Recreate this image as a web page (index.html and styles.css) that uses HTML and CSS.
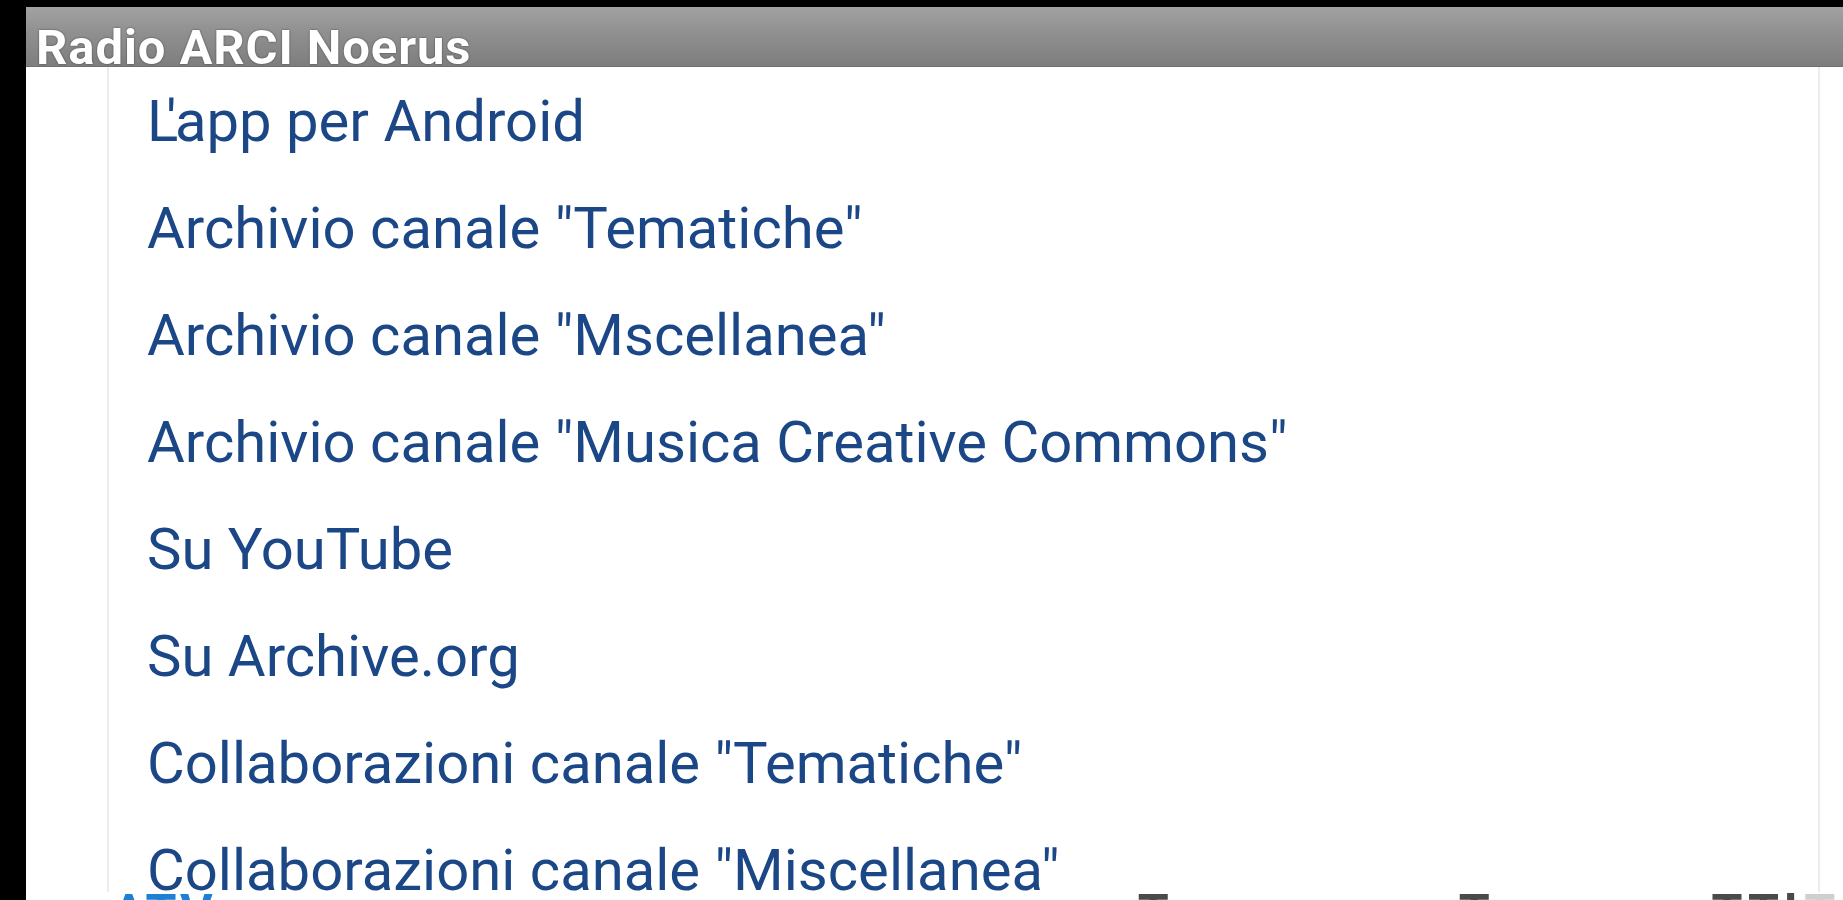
FILE: index.html
```html
<!DOCTYPE html>
<html lang="it">
<head>
<meta charset="utf-8">
<title>Radio ARCI Noerus</title>
<link rel="stylesheet" href="styles.css">
</head>
<body>
<div class="screen">
  <header class="titlebar"><span class="title">Radio ARCI Noerus</span></header>
  <main class="content">
    <nav class="panel">
      <ul class="menu">
        <li><a href="#"><span class="kern-l">L</span>'app per Android</a></li>
        <li><a href="#">Archivio canale "Tematiche"</a></li>
        <li><a href="#">Archivio canale "Mscellanea"</a></li>
        <li><a href="#">Archivio canale "Musica Creative Commons"</a></li>
        <li><a href="#">Su YouTube</a></li>
        <li><a href="#">Su Archive.org</a></li>
        <li><a href="#">Collaborazioni canale "Tematiche"</a></li>
        <li><a href="#">Collaborazioni canale "Miscellanea"</a></li>
      </ul>
    </nav>
    <div class="below">
      <span class="b-blue">ATV</span>
      <span class="b-gray g1">T</span>
      <span class="b-gray g2">T</span>
      <span class="b-gray g3">TTl</span>
      <span class="b-light">T</span>
    </div>
  </main>
</div>
</body>
</html>
```
FILE: styles.css
```css
html, body {
  margin: 0;
  padding: 0;
  height: 900px;
  overflow: hidden;
  background: #000;
}
.screen {
  margin-left: 26px;
  padding-top: 7px;
  height: 893px;
  display: flex;
  flex-direction: column;
}
.titlebar {
  flex-shrink: 0;
  height: 60px;
  box-sizing: border-box;
  padding: 17px 0 0 10px;
  overflow: hidden;
  background: linear-gradient(#a2a2a2 0%, #8f8f8f 45%, #7e7e7e 100%);
  border-bottom: 1px solid #707070;
}
.title {
  display: block;
  font-family: Roboto, "Liberation Sans", sans-serif;
  font-weight: 700;
  font-size: 49px;
  line-height: 48px;
  color: #fff;
  letter-spacing: 0.9px;
  text-shadow: 0 0 2px rgba(0,0,0,0.55);
}
.content {
  flex: 1;
  background: #fff;
  display: flex;
  flex-direction: column;
  overflow: hidden;
}
.panel {
  flex-shrink: 0;
  margin-left: 81px;
  width: 1713px;
  box-sizing: border-box;
  height: 825px;
  overflow: hidden;
  border-left: 2px solid #ececec;
  border-right: 2px solid #ececec;
}
.menu {
  list-style: none;
  margin: 0;
  padding: 1px 0 0 38px;
}
.menu li {
  font-family: Roboto, "Liberation Sans", sans-serif;
  font-size: 58px;
  line-height: 107px;
  white-space: nowrap;
}
.menu a {
  color: #1b4787;
  text-decoration: none;
}
.kern-l {
  margin-right: -12px;
}
.below {
  flex-shrink: 0;
  height: 20px;
  display: flex;
  font-family: Roboto, "Liberation Sans", sans-serif;
  font-weight: 700;
  font-size: 50px;
  line-height: 50px;
  margin-top: -4px;
}
.b-blue {
  color: #1e7fd6;
  margin-left: 86px;
  letter-spacing: 3px;
}
.b-gray { color: #4a4a4a; }
.g1 { margin-left: 922px; }
.g2 { margin-left: 290px; }
.g3 { margin-left: 222px; letter-spacing: 5px; }
.b-light { color: #cfcfcf; margin-left: 2px; }
```
